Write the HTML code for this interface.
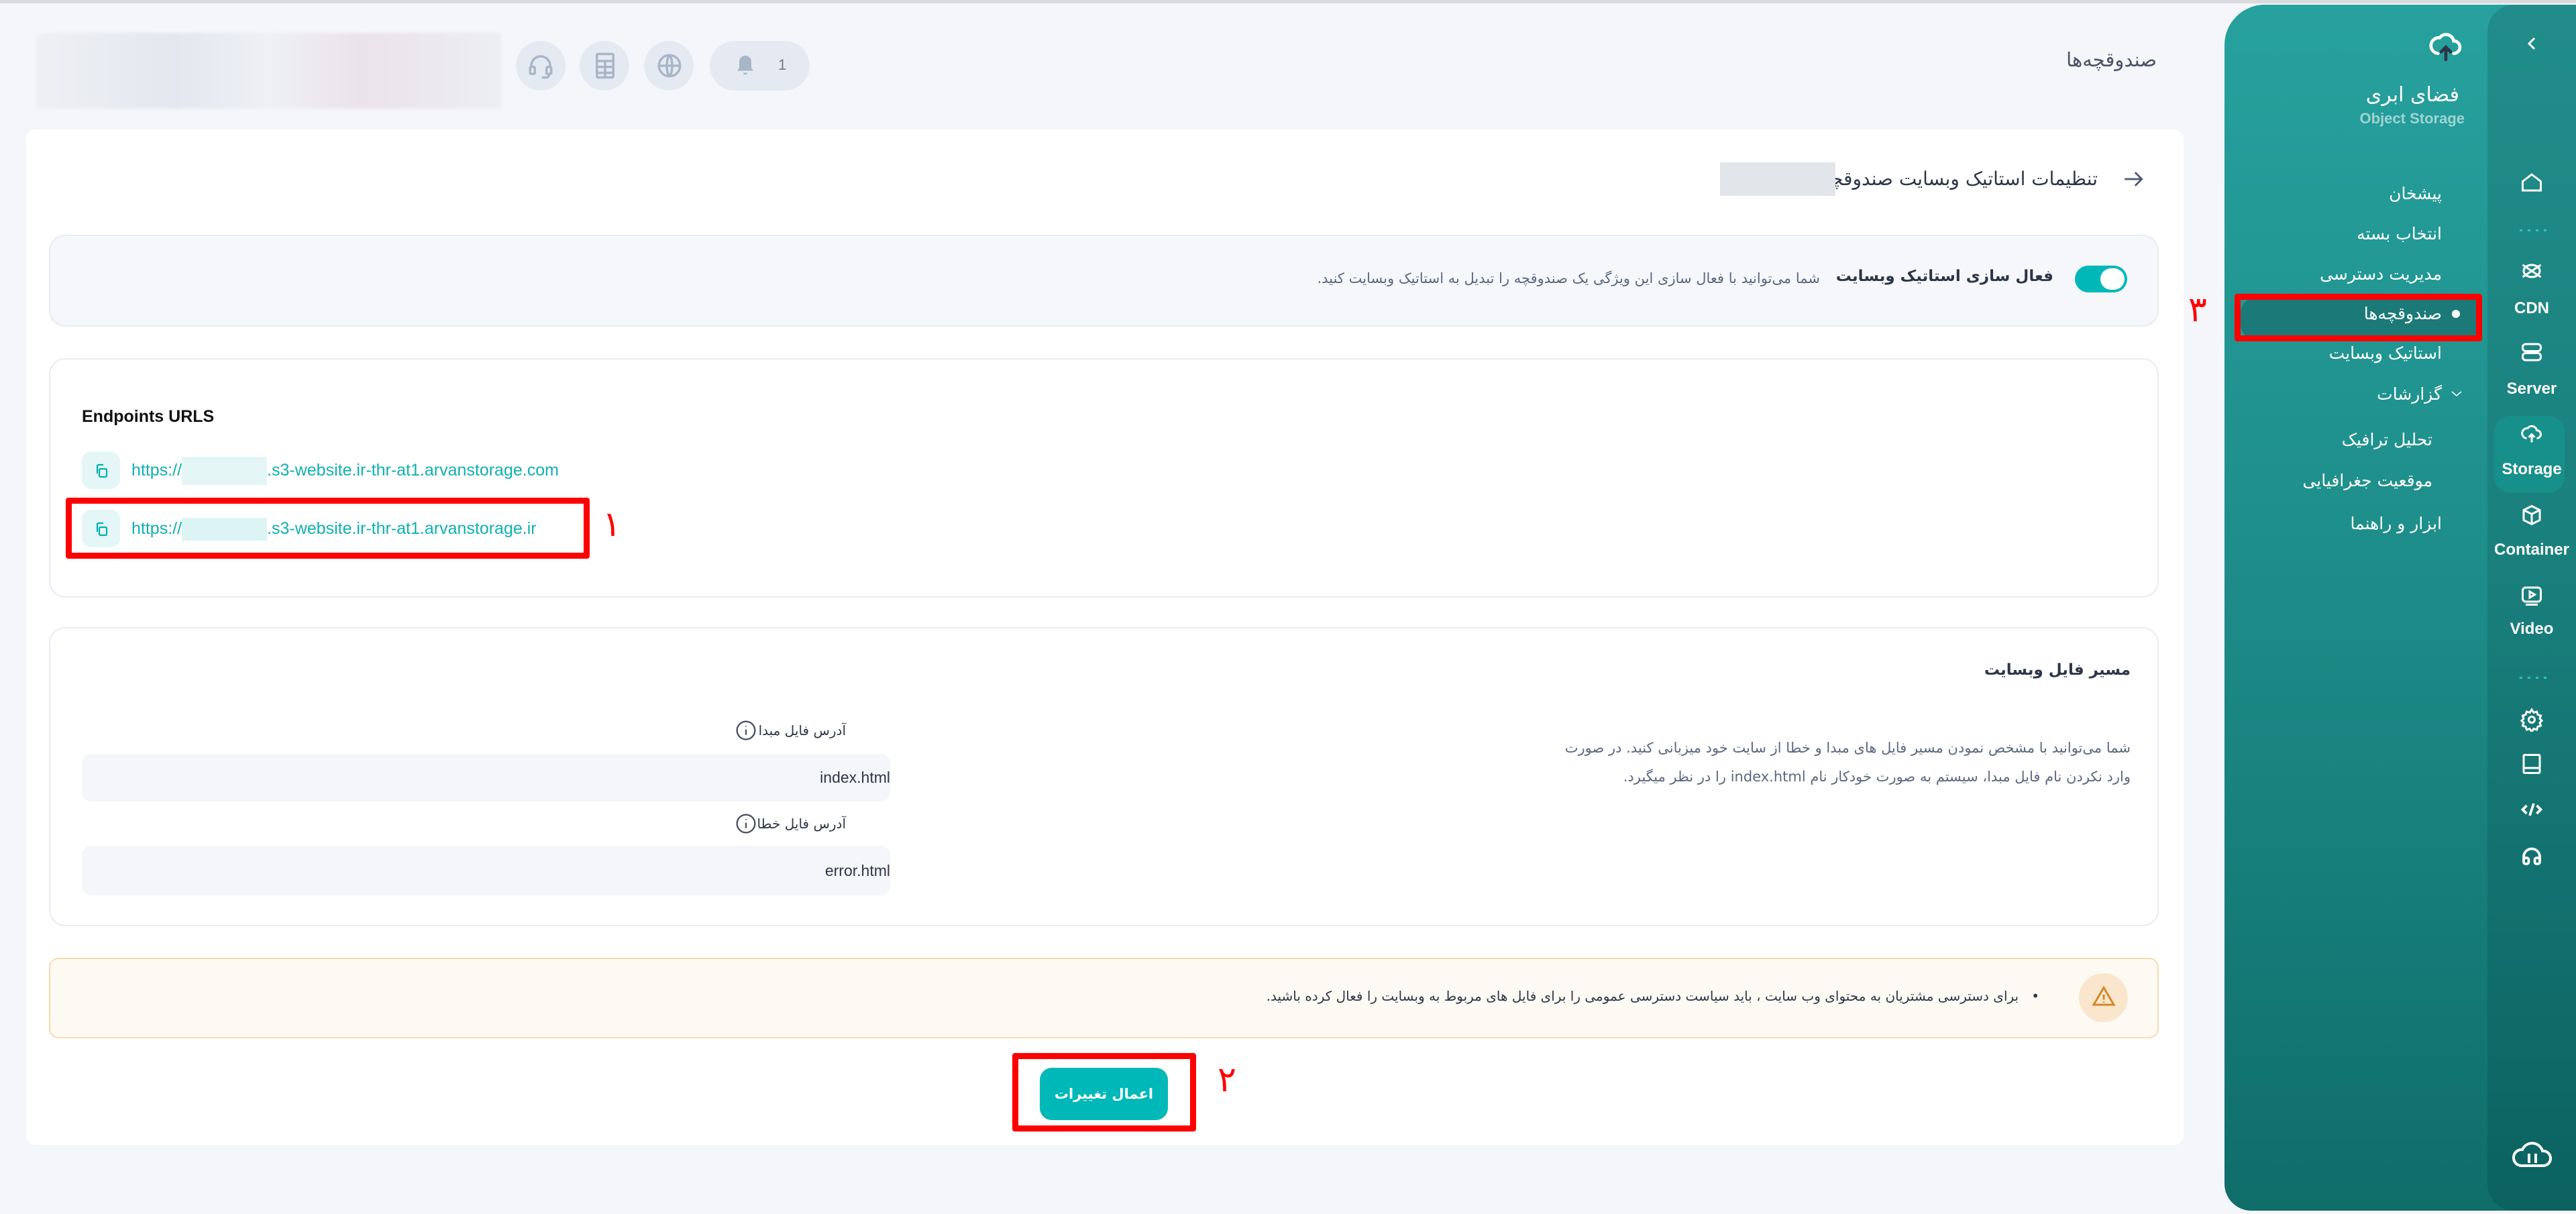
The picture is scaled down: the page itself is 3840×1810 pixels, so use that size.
<!DOCTYPE html>
<html><head><meta charset="utf-8">
<style>
*{box-sizing:border-box;margin:0;padding:0}
html,body{width:3840px;height:1810px;overflow:hidden}
body{background:#f5f6fa;font-family:"Liberation Sans","DejaVu Sans",sans-serif;position:relative;color:#2d3648}
.a{position:absolute}
.fa{font-family:"DejaVu Sans","Liberation Sans",sans-serif;direction:rtl;white-space:nowrap}
.card{position:absolute;border:2px solid #e8ecf2;border-radius:24px;background:#fff}
.r{position:absolute;border:9px solid #ff0000;border-radius:4px}
.red{position:absolute;color:#ff0000;font-family:"DejaVu Sans",sans-serif;font-size:52px}
.circ{position:absolute;width:74px;height:74px;border-radius:37px;background:#e5eaf2}
.mi{position:absolute;right:200px;color:#fff;font-size:25px;text-align:right}
.rl{position:absolute;left:0;width:132px;text-align:center;color:#fff;font-size:24px;font-weight:bold}
.ri{position:absolute;left:48px}
.blur{display:inline-block;width:127px;height:42px;vertical-align:middle;background:#e3f5f5}
</style></head><body>
<div class="a" style="left:0;top:0;width:3840px;height:5px;background:#d9dadd"></div>

<!-- header -->
<div class="a" style="left:54px;top:49px;width:693px;height:113px;background:linear-gradient(90deg,#eef0f4,#e4e7ef 30%,#eef0f4 50%,#ebe3ea 70%,#eceef3);filter:blur(2px)"></div>
<div class="circ" style="left:769px;top:61px"></div>
<div class="circ" style="left:864px;top:61px"></div>
<div class="circ" style="left:960px;top:61px"></div>
<div class="a" style="left:1058px;top:61px;width:149px;height:74px;border-radius:37px;background:#e5eaf2"></div>
<svg class="a" style="left:785px;top:77px" width="42" height="42" viewBox="0 0 24 24" fill="none" stroke="#a9b6c8" stroke-width="2"><path d="M4 14v-2a8 8 0 0 1 16 0v2"/><rect x="3" y="13" width="4" height="6" rx="1"/><rect x="17" y="13" width="4" height="6" rx="1"/><path d="M19 19v1a2 2 0 0 1-2 2h-4"/></svg>
<svg class="a" style="left:881px;top:77px" width="42" height="42" viewBox="0 0 24 24" fill="none" stroke="#a9b6c8" stroke-width="2"><rect x="5" y="2" width="14" height="20" rx="1"/><path d="M5 8h14M5 13h14M5 18h14M12 8v14"/></svg>
<svg class="a" style="left:977px;top:77px" width="42" height="42" viewBox="0 0 24 24" fill="none" stroke="#a9b6c8" stroke-width="2"><circle cx="12" cy="12" r="9"/><path d="M3 12h18M12 3c3 3 3 15 0 18M12 3c-3 3-3 15 0 18"/></svg>
<svg class="a" style="left:1093px;top:80px" width="36" height="36" viewBox="0 0 24 24" fill="#a9b6c8"><path d="M12 2a6 6 0 0 0-6 6v6l-2 3h16l-2-3V8a6 6 0 0 0-6-6zM10 19h4a2 2 0 0 1-4 0z"/></svg>
<div class="a" style="left:1160px;top:84px;font-size:22px;color:#6b7a90">1</div>
<div class="a fa" style="right:625px;top:72px;font-size:29px;color:#4a5366">صندوقچه‌ها</div>

<!-- main card -->
<div class="a" style="left:39px;top:193px;width:3216px;height:1514px;background:#fff;border-radius:14px"></div>
<svg class="a" style="left:3163px;top:250px" width="34" height="34" viewBox="0 0 24 24" fill="none" stroke="#4a5a72" stroke-width="2"><path d="M3 12h18M14 5l7 7-7 7"/></svg>
<div class="a fa" style="right:713px;top:250px;font-size:28px;color:#2d3648">تنظیمات استاتیک وبسایت صندوقچه</div>
<div class="a" style="left:2564px;top:242px;width:172px;height:50px;background:#e2e5ea"></div>

<!-- toggle section -->
<div class="a" style="left:73px;top:350px;width:3145px;height:137px;background:#f5f7fa;border:2px solid #e8ecf2;border-radius:24px"></div>
<div class="a" style="left:3093px;top:396px;width:78px;height:40px;border-radius:20px;background:#00b8b8"></div>
<div class="a" style="left:3131px;top:400px;width:36px;height:32px;border-radius:16px;background:#fff"></div>
<div class="a fa" style="right:779px;top:399px;font-size:23px;font-weight:bold;color:#2d3648">فعال سازی استاتیک وبسایت</div>
<div class="a fa" style="right:1127px;top:403px;font-size:21px;color:#5b6880">شما می‌توانید با فعال سازی این ویژگی یک صندوقچه را تبدیل به استاتیک وبسایت کنید.</div>

<!-- endpoints -->
<div class="card" style="left:73px;top:534px;width:3145px;height:357px"></div>
<div class="a" style="left:122px;top:607px;font-size:25px;font-weight:bold;color:#111">Endpoints URLS</div>
<div class="a" style="left:122px;top:673px;width:57px;height:56px;border-radius:14px;background:#e4f6f6"></div>
<div class="a" style="left:122px;top:760px;width:57px;height:56px;border-radius:14px;background:#e4f6f6"></div>
<svg class="a" style="left:139px;top:690px" width="24" height="24" viewBox="0 0 24 24" fill="none" stroke="#00b0b0" stroke-width="2.2"><rect x="9" y="9" width="11" height="12" rx="2"/><path d="M6 16V5a2 2 0 0 1 2-2h7"/></svg>
<svg class="a" style="left:139px;top:777px" width="24" height="24" viewBox="0 0 24 24" fill="none" stroke="#00b0b0" stroke-width="2.2"><rect x="9" y="9" width="11" height="12" rx="2"/><path d="M6 16V5a2 2 0 0 1 2-2h7"/></svg>
<div class="a" style="left:196px;top:678px;font-size:25px;color:#10b0b0;line-height:46px">https://<span class="blur"></span>.s3-website.ir-thr-at1.arvanstorage.com</div>
<div class="a" style="left:196px;top:765px;font-size:25px;color:#10b0b0;line-height:46px">https://<span class="blur" style="height:34px;background:#dcf4f4"></span>.s3-website.ir-thr-at1.arvanstorage.ir</div>
<div class="r" style="left:98px;top:742px;width:781px;height:91px"></div>
<div class="red" style="left:898px;top:752px">١</div>

<!-- file path -->
<div class="card" style="left:73px;top:935px;width:3145px;height:446px"></div>
<div class="a fa" style="right:664px;top:986px;font-size:23px;font-weight:bold;color:#2d3648">مسیر فایل وبسایت</div>
<div class="a fa" style="right:664px;top:1103px;font-size:21px;color:#5b6880">شما می‌توانید با مشخص نمودن مسیر فایل های مبدا و خطا از سایت خود میزبانی کنید. در صورت</div>
<div class="a fa" style="right:664px;top:1146px;font-size:21px;color:#5b6880">وارد نکردن نام فایل مبدا، سیستم به صورت خودکار نام index.html را در نظر میگیرد.</div>
<div class="a fa" style="right:2579px;top:1077px;font-size:20px;color:#2d3648">آدرس فایل مبدا</div>
<div class="a fa" style="right:2579px;top:1216px;font-size:20px;color:#2d3648">آدرس فایل خطا</div>
<svg class="a" style="left:1096px;top:1073px" width="32" height="32" viewBox="0 0 24 24" fill="none" stroke="#4a5366" stroke-width="1.8"><circle cx="12" cy="12" r="10"/><path d="M12 11v6M12 7v1"/></svg>
<svg class="a" style="left:1096px;top:1212px" width="32" height="32" viewBox="0 0 24 24" fill="none" stroke="#4a5366" stroke-width="1.8"><circle cx="12" cy="12" r="10"/><path d="M12 11v6M12 7v1"/></svg>
<div class="a" style="left:122px;top:1124px;width:1205px;height:71px;background:#f5f6f9;border-radius:14px"></div>
<div class="a" style="left:122px;top:1261px;width:1205px;height:74px;background:#f5f6f9;border-radius:14px"></div>
<div class="a" style="right:2513px;top:1146px;font-size:23px;color:#2d3648">index.html</div>
<div class="a" style="right:2513px;top:1285px;font-size:23px;color:#2d3648">error.html</div>

<!-- warning -->
<div class="a" style="left:73px;top:1428px;width:3145px;height:120px;background:#fdf9f3;border:2px solid #f5dcb0;border-radius:14px"></div>
<div class="a" style="left:3099px;top:1451px;width:73px;height:73px;border-radius:37px;background:#fae6cc"></div>
<svg class="a" style="left:3118px;top:1468px" width="36" height="36" viewBox="0 0 24 24" fill="none" stroke="#d08a2a" stroke-width="2"><path d="M12 3L2 20h20z"/><path d="M12 10v5M12 17v1"/></svg>
<div class="a fa" style="right:800px;top:1473px;font-size:20px;color:#2d3648">•&nbsp;&nbsp;&nbsp;برای دسترسی مشتریان به محتوای وب سایت ، باید سیاست دسترسی عمومی را برای فایل های مربوط به وبسایت را فعال کرده باشید.</div>

<!-- button -->
<div class="a fa" style="left:1550px;top:1592px;width:191px;height:78px;border-radius:18px;background:#00b8b8;color:#fff;font-size:21px;font-weight:bold;text-align:center;line-height:78px">اعمال تغییرات</div>
<div class="r" style="left:1509px;top:1570px;width:274px;height:117px"></div>
<div class="red" style="left:1815px;top:1580px">٢</div>

<!-- sidebar -->
<div class="a" style="left:3316px;top:7px;width:524px;height:1798px;border-radius:60px 0 0 40px;background:linear-gradient(180deg,#27a19e,#1e8e8a 45%,#0f6d6a)"></div>
<div class="a" style="left:3708px;top:7px;width:132px;height:1798px;border-radius:40px 0 0 40px;background:linear-gradient(180deg,#218d8a,#1a807d 45%,#0b6260)"></div>
<div class="red" style="left:3262px;top:432px">٣</div>
<div class="a" style="left:3340px;top:443px;width:360px;height:64px;border-radius:24px;background:#1b7a78"></div>
<div class="r" style="left:3331px;top:438px;width:369px;height:71px"></div>

<svg class="a" style="left:3618px;top:40px" width="56" height="56" viewBox="0 0 24 24" fill="none" stroke-width="2" stroke-linecap="round"><path stroke="#fff" d="M7 17a5 5 0 0 1 1-10 5 5 0 0 1 9 2 4 4 0 0 1 0 8"/><path stroke="#2d3648" d="M12 21v-8M9 16l3-3 3 3"/></svg>
<div class="a fa" style="right:174px;top:124px;font-size:30px;color:#fff">فضای ابری</div>
<div class="a" style="right:166px;top:164px;font-size:22px;font-weight:bold;color:#9ed4d2">Object Storage</div>
<div class="mi fa" style="top:274px">پیشخان</div>
<div class="mi fa" style="top:334px">انتخاب بسته</div>
<div class="mi fa" style="top:394px">مدیریت دسترسی</div>
<div class="mi fa" style="top:453px">صندوقچه‌ها</div>
<div class="a" style="left:3655px;top:462px;width:12px;height:12px;border-radius:6px;background:#fff"></div>
<div class="mi fa" style="top:512px">استاتیک وبسایت</div>
<div class="mi fa" style="top:573px">گزارشات</div>
<svg class="a" style="left:3652px;top:580px" width="20" height="14" viewBox="0 0 20 14" fill="none" stroke="#fff" stroke-width="1.5"><path d="M3 4l7 6 7-6"/></svg>
<div class="mi fa" style="top:641px;right:214px">تحلیل ترافیک</div>
<div class="mi fa" style="top:702px;right:214px">موقعیت جغرافیایی</div>
<div class="mi fa" style="top:766px">ابزار و راهنما</div>

<!-- rail -->
<div class="a" style="left:3708px;top:0;width:132px;height:1810px">
<svg class="ri" style="top:50px;left:54px" width="24" height="30" viewBox="0 0 24 30" fill="none" stroke="#fff" stroke-width="3"><path d="M16 7l-8 8 8 8"/></svg>
<svg class="ri" style="top:254px" width="36" height="36" viewBox="0 0 24 24" fill="none" stroke="#fff" stroke-width="2"><path d="M3 11l9-7 9 7v9H3z"/></svg>
<div class="a" style="left:48px;top:342px;width:40px;height:3px;background:repeating-linear-gradient(90deg,#27c3c0 0 4px,transparent 4px 12px)"></div>
<svg class="ri" style="top:386px" width="36" height="36" viewBox="0 0 24 24" fill="none" stroke="#fff" stroke-width="2"><ellipse cx="12" cy="12" rx="8" ry="6"/><path d="M3 6l18 12M21 6L3 18"/></svg>
<div class="rl" style="top:446px">CDN</div>
<svg class="ri" style="top:507px" width="36" height="36" viewBox="0 0 24 24" fill="none" stroke="#fff" stroke-width="2"><rect x="3" y="4" width="18" height="7" rx="3"/><rect x="3" y="13" width="18" height="7" rx="3"/></svg>
<div class="rl" style="top:566px">Server</div>
<div class="a" style="left:10px;top:620px;width:105px;height:115px;border-radius:24px;background:#178f8b"></div>
<svg class="ri" style="top:628px" width="36" height="36" viewBox="0 0 24 24" fill="none" stroke="#fff" stroke-width="2"><path d="M7 17a5 5 0 0 1 1-10 5 5 0 0 1 9 2 4 4 0 0 1 0 8M12 21v-8M9 16l3-3 3 3"/></svg>
<div class="rl" style="top:686px">Storage</div>
<svg class="ri" style="top:750px" width="36" height="36" viewBox="0 0 24 24" fill="none" stroke="#fff" stroke-width="2"><path d="M12 3l8 4v10l-8 4-8-4V7zM4 7l8 4 8-4M12 11v10"/></svg>
<div class="rl" style="top:806px">Container</div>
<svg class="ri" style="top:870px" width="36" height="36" viewBox="0 0 24 24" fill="none" stroke="#fff" stroke-width="2"><rect x="3" y="4" width="18" height="14" rx="3"/><path d="M10 8l5 3-5 3z"/><path d="M6 21h12"/></svg>
<div class="rl" style="top:924px">Video</div>
<div class="a" style="left:48px;top:1009px;width:40px;height:3px;background:repeating-linear-gradient(90deg,#27c3c0 0 4px,transparent 4px 12px)"></div>
<svg class="ri" style="top:1055px" width="36" height="36" viewBox="0 0 24 24" fill="none" stroke="#fff" stroke-width="2"><circle cx="12" cy="12" r="3"/><path d="M12 2l2 3 3-1 1 3 3 1-1 3 2 2-2 2 1 3-3 1-1 3-3-1-2 3-2-3-3 1-1-3-3-1 1-3-2-2 2-2-1-3 3-1 1-3 3 1z"/></svg>
<svg class="ri" style="top:1121px" width="36" height="36" viewBox="0 0 24 24" fill="none" stroke="#fff" stroke-width="2"><rect x="4" y="3" width="16" height="18" rx="1"/><path d="M4 16h16"/></svg>
<svg class="ri" style="top:1189px" width="36" height="36" viewBox="0 0 24 24" fill="none" stroke="#fff" stroke-width="2.5"><path d="M7 8l-4 4 4 4M17 8l4 4-4 4M14 6l-4 12"/></svg>
<svg class="ri" style="top:1258px" width="36" height="36" viewBox="0 0 24 24" fill="none" stroke="#fff" stroke-width="2.5"><path d="M4 17v-4a8 8 0 0 1 16 0v4"/><rect x="4" y="14" width="5" height="6" rx="2"/><rect x="15" y="14" width="5" height="6" rx="2"/></svg>
<svg class="a" style="left:36px;top:1700px" width="62" height="52" viewBox="0 0 62 52" fill="none" stroke="#fff" stroke-width="4"><path d="M14 38a12 12 0 0 1 2-24 16 16 0 0 1 30 2 11 11 0 0 1 2 22z"/><path d="M26 20v14M36 20v14"/></svg>
</div>
</body></html>
